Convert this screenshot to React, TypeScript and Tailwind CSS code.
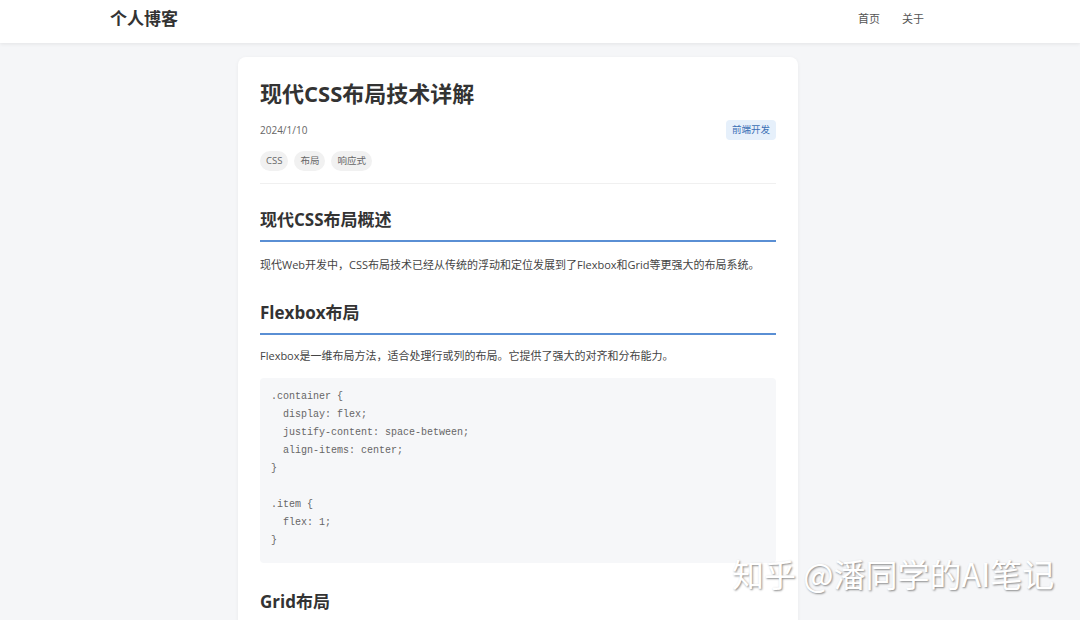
import React from "react"

const sans = "font-['Open_Sans','Noto_Sans_CJK_SC',sans-serif]"

function Header() {
  return (
    <header className="bg-white shadow-[0_1px_4px_rgba(0,0,0,0.08)]">
      <div className="w-[860px] mx-auto h-[43px] flex justify-between items-center pr-[46px] pb-[5px]">
        {/* Logo */}
        <h1 className="text-[17px] font-bold text-[#333]">个人博客</h1>
        <ul className="flex gap-[22px] text-[11px] text-[#555]">
          <li><a href="#">首页</a></li>
          <li><a href="#">关于</a></li>
        </ul>
      </div>
    </header>
  )
}

const code = `.container {
  display: flex;
  justify-content: space-between;
  align-items: center;
}

.item {
  flex: 1;
}`

function SectionTitle({ children }: { children: React.ReactNode }) {
  return (
    <h2 className="text-[17px] font-bold text-[#333] leading-[24px] pb-[8px] border-b-2 border-[#5a8fd4]">
      {children}
    </h2>
  )
}

export default function App() {
  return (
    <div className={`min-h-[620px] bg-[#f5f6f8] ${sans} relative overflow-hidden`}>
      <Header />

      <main className="pt-[14px]">
        <article className="w-[560px] ml-[238px] bg-white rounded-lg shadow-[0_1px_4px_rgba(0,0,0,0.05)] px-[22px] pt-[18px] pb-[40px]">
          {/* Article header */}
          <div className="pb-[12px] border-b border-[#f0f0f0]">
            <h1 className="text-[22px] font-bold text-[#333] leading-[36px]">现代CSS布局技术详解</h1>
            <div className="flex justify-between items-center mt-[9px]">
              <span className="text-[10px] text-[#666]">2024/1/10</span>
              <span className="text-[9.5px] text-[#3a6fb5] bg-[#e6f0fb] rounded px-[6px] py-[3px]">前端开发</span>
            </div>
            <div className="flex gap-[6px] mt-[11px]">
              {["CSS", "布局", "响应式"].map((t) => (
                <span key={t} className="text-[9.5px] text-[#666] bg-[#f1f1f1] rounded-full px-[6px] h-[20px] flex items-center">
                  {t}
                </span>
              ))}
            </div>
          </div>

          <section className="mt-[24px]">
            <SectionTitle>现代CSS布局概述</SectionTitle>
            <p className="text-[11px] text-[#444] mt-[14px] leading-[18px]">
              现代Web开发中，CSS布局技术已经从传统的浮动和定位发展到了Flexbox和Grid等更强大的布局系统。
            </p>
          </section>

          <section className="mt-[27px]">
            <SectionTitle>Flexbox布局</SectionTitle>
            <p className="text-[11px] text-[#444] mt-[12px] leading-[18px]">
              Flexbox是一维布局方法，适合处理行或列的布局。它提供了强大的对齐和分布能力。
            </p>
            <pre className="mt-[13px] bg-[#f6f7f9] rounded px-[11px] py-[10px] h-[185px] font-['Liberation_Mono',monospace] text-[10px] leading-[18px] text-[#666]">
              {code}
            </pre>
          </section>

          <section className="mt-[27px]">
            <SectionTitle>Grid布局</SectionTitle>
          </section>
        </article>
      </main>

      {/* watermark */}
      <div className="absolute left-[732px] top-[553px] text-[32px] leading-[40px] text-white font-['Noto_Sans_CJK_SC',sans-serif] [text-shadow:1px_1px_2px_rgba(0,0,0,0.45)] pointer-events-none">
        知乎 @潘同学的AI笔记
      </div>
    </div>
  )
}
